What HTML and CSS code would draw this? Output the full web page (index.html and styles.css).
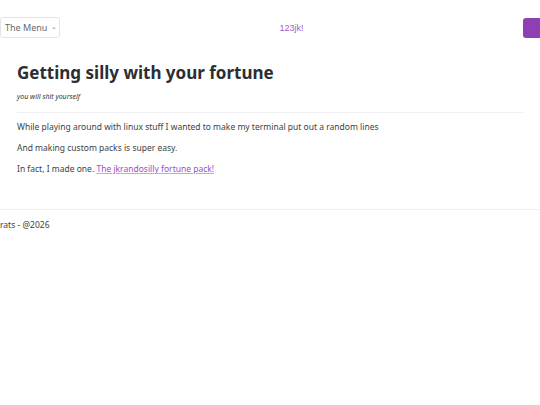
FILE: index.html
```html
<!DOCTYPE html>
<html>
<head>
<meta charset="utf-8">
<link rel="stylesheet" href="styles.css">
</head>
<body>
<header class="topbar">
  <button class="menu-btn">The Menu <span class="chev">&#8964;</span></button>
  <a class="brand" href="#">123jk!</a>
  <button class="action-btn"></button>
</header>
<main class="content">
  <h1 class="title">Getting silly with your fortune</h1>
  <p class="subtitle">you will shit yourself</p>
  <hr class="rule">
  <p class="para first">While playing around with linux stuff I wanted to make my terminal put out a random lines</p>
  <p class="para">And making custom packs is super easy.</p>
  <p class="para">In fact, I made one. <a class="link" href="#">The jkrandosilly fortune pack!</a></p>
</main>
<footer class="footer">rats - @2026</footer>
</body>
</html>
```
FILE: styles.css
```css
html, body { margin: 0; padding: 0; background: #fff; }
body { font-family: "Noto Sans", "Open Sans", sans-serif; color: #3a3d42; width: 540px; overflow: hidden; }
.topbar { display: flex; align-items: center; justify-content: space-between; padding: 17px 0 0 0; height: 21px; }
.menu-btn { font-family: inherit; font-size: 9px; color: #666a70; background: #fff; border: 1px solid #e2e4e8; border-radius: 3px; height: 21px; width: 60px; padding: 0 0 0 4px; text-align: left; display: flex; align-items: center; gap: 4px; }
.chev { font-size: 7px; color: #888; line-height: 1; margin-top: -3px; }
.brand { font-family: "Liberation Sans", Arial, sans-serif; font-size: 9px; color: #a35ccc; text-decoration: none; }
.action-btn { width: 20px; height: 20px; background: #8e3fb3; border: 0; border-radius: 3px; margin-right: -3px; padding: 0; }
.content { padding: 0 17px; }
.title { font-size: 17px; font-weight: 700; color: #2b2e33; margin: 23px 0 0; line-height: 24px; }
.subtitle { font-size: 7px; font-style: italic; color: #333; margin: 7px 0 0; line-height: 10px; }
.rule { border: 0; border-top: 1px solid #f0f0f2; margin: 10px 0 0; }
.para { font-size: 8.5px; line-height: 12px; margin: 9px 0 0; color: #3c3f44; }
.para.first { margin-top: 8px; }
.link { color: #9b4dca; text-decoration: underline; text-decoration-color: #c9a3e0; }
.footer { border-top: 1px solid #efeff1; margin-top: 34px; padding-top: 9px; font-size: 8.5px; line-height: 12px; color: #3c3f44; }
```
